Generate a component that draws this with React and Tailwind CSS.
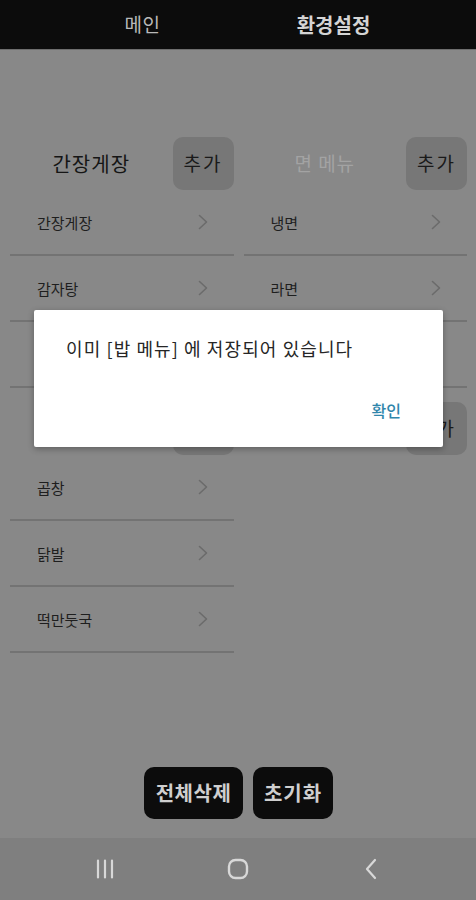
import React from "react";

const FONT = { fontFamily: '"Noto Sans CJK KR", "Noto Sans", sans-serif' };

function Chevron() {
  return (
    <svg width="12" height="18" viewBox="0 0 12 18" fill="none">
      <path d="M2.5 2.5 L9.5 9 L2.5 15.5" stroke="#6b6b6b" strokeWidth="1.6" strokeLinecap="round" strokeLinejoin="round" />
    </svg>
  );
}

function Row({ label }) {
  return (
    <div className="h-[66px] flex items-center justify-between pl-[27px] pr-[25px] border-b-2 border-[#737373]">
      <span className="text-[15px] text-[#1e1e1e] leading-none">{label}</span>
      <Chevron />
    </div>
  );
}

function Category({ title, placeholder, items }) {
  return (
    <div className="flex flex-col">
      <div className="h-[53px] flex items-center">
        <div className="flex-1 flex justify-center">
          <span className={placeholder ? "text-[19px] text-[#a3a3a3] tracking-[1px]" : "text-[20px] text-[#151515] tracking-[1px]"}>
            {title}
          </span>
        </div>
        <div className="w-[61px] h-[53px] rounded-[10px] bg-[#777777] flex items-center justify-center text-[19px] text-[#1a1a1a] tracking-[2px]">
          추가
        </div>
      </div>
      {items.map((it, i) => (
        <Row key={i} label={it} />
      ))}
    </div>
  );
}

export default function App() {
  return (
    <div className="relative w-[476px] h-[900px] bg-[#888888] flex flex-col overflow-hidden" style={FONT}>
      <div className="h-[50px] bg-[#0c0c0c] border-b border-[#6e6e6e] flex justify-center items-center shrink-0">
        <div className="w-[191px] flex justify-center">
          <span className="text-[19px] text-[#b9b9b9] tracking-[0.5px]">메인</span>
        </div>
        <div className="w-[191px] flex justify-center">
          <span className="text-[20px] font-bold text-[#d4d4d4]">환경설정</span>
        </div>
      </div>

      <div className="grid grid-cols-2 gap-[10px] pl-[10px] pr-[9px] pt-[87px]">
        <div className="flex flex-col gap-[14px]">
          <Category title="간장게장" items={["간장게장", "감자탕", ""]} />
          <Category title="" items={["곱창", "닭발", "떡만둣국"]} />
        </div>
        <div className="flex flex-col gap-[14px]">
          <Category title="면 메뉴" placeholder items={["냉면", "라면", ""]} />
          <Category title="" placeholder items={[]} />
        </div>
      </div>

      <div className="mt-auto flex justify-center gap-[10px] pb-[19px] pl-[1px]">
        <div className="w-[99px] h-[52px] rounded-[10px] bg-[#0c0c0c] flex items-center justify-center text-[20px] font-semibold text-[#cfcfcf] tracking-[0.5px]">
          전체삭제
        </div>
        <div className="w-[80px] h-[52px] rounded-[10px] bg-[#0c0c0c] flex items-center justify-center text-[20px] font-semibold text-[#cfcfcf] tracking-[1px]">
          초기화
        </div>
      </div>

      <div className="h-[62px] bg-[#7f7f7f] flex items-center shrink-0 pl-[55px]">
        <div className="w-[100px] flex justify-center">
          <svg width="20" height="20" viewBox="0 0 20 20" fill="none">
            <path d="M3 1.5 V18.5 M10 1.5 V18.5 M17 1.5 V18.5" stroke="#d8d8d8" strokeWidth="2.2" strokeLinecap="round" />
          </svg>
        </div>
        <div className="w-[165px] flex justify-center">
          <svg width="22" height="22" viewBox="0 0 22 22" fill="none">
            <rect x="2" y="2" width="18" height="18" rx="6.5" stroke="#d8d8d8" strokeWidth="2.4" />
          </svg>
        </div>
        <div className="w-[102px] flex justify-center">
          <svg width="14" height="22" viewBox="0 0 14 22" fill="none">
            <path d="M11 2 L3 11 L11 20" stroke="#d8d8d8" strokeWidth="2.2" strokeLinecap="round" strokeLinejoin="round" />
          </svg>
        </div>
      </div>

      <div className="absolute left-[34px] top-[310px] w-[409px] h-[137px] bg-white rounded-[2px] shadow-[0_2px_6px_rgba(0,0,0,0.3)] flex flex-col">
        <div className="pt-[26px] pl-[32px] text-[18px] tracking-[1.1px] text-[#262626] leading-[24px]">
          이미 [밥 메뉴] 에 저장되어 있습니다
        </div>
        <div className="mt-auto pb-[25px] pr-[42px] flex justify-end">
          <span className="text-[16px] text-[#2f86ab] font-medium">확인</span>
        </div>
      </div>
    </div>
  );
}
